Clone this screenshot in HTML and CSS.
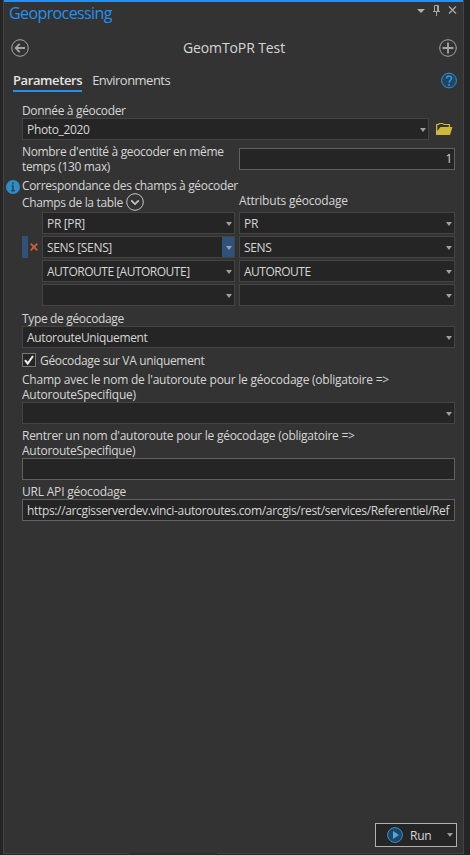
FILE: index.html
```html
<!DOCTYPE html>
<html lang="fr">
<head>
<meta charset="utf-8">
<title>Geoprocessing</title>
<link rel="stylesheet" href="styles.css">
</head>
<body>
<main class="panel">
  <header class="titlebar">
    <h1>Geoprocessing</h1>
    <svg class="window-icons" width="42" height="14" viewBox="0 0 42 14">
      <path class="fill" d="M1 5h8L5 9z"/>
      <path d="M18.5 1.5h4v6h-4zM17 7.5h7M20.5 8v4M21.5 2v5"/>
      <path class="cross" d="M33 2.5l7 7M40 2.5l-7 7"/>
    </svg>
  </header>
  <div class="toolbar">
    <svg width="18" height="18" viewBox="0 0 18 18"><circle cx="9" cy="9" r="8.3"/><path class="thick" d="M4.8 9H14M8.7 4.8L4.6 9l4.1 4.2"/></svg>
    <h2>GeomToPR Test</h2>
    <svg width="18" height="18" viewBox="0 0 18 18"><circle cx="9" cy="9" r="8.3"/><path class="thick" d="M3.5 9h11M9 3.5v11"/></svg>
  </div>
  <nav class="tabs">
    <span class="tab active">Parameters</span>
    <span class="tab">Environments</span>
    <svg class="help" width="16" height="17" viewBox="0 0 16 17"><circle cx="8" cy="8.5" r="7.4"/><path d="M5.5 6.5c0-3.3 5-3.1 5-.2 0 2-2.5 2-2.5 4.2M8 12v1.7"/></svg>
  </nav>
  <section class="form">
    <label>Donnée à géocoder</label>
    <div class="source">
      <div class="field combo">Photo_2020</div>
      <svg width="17" height="14" viewBox="0 0 17 14"><path fill="#cfb73a" d="M0 2h2l1-1h4l1 1h6v3h2.5L14 13H0z"/><path fill="#333" d="M1.3 3h1.5l1-1h3l1 1h5v2H4.5L1.3 9z"/></svg>
    </div>
    <div class="count">
      <label>Nombre d'entité à geocoder en même<br>temps (130 max)</label>
      <div class="field text number">1</div>
    </div>
    <div class="mapping-title">
      <svg class="info" width="14" height="14" viewBox="0 0 14 14"><circle cx="7" cy="7" r="7"/><path d="M7 2.5v2M5.5 6H7v4.5M5 10.8h4"/></svg>
      <label>Correspondance des champs à géocoder</label>
    </div>
    <div class="mapping-head">
      <label>Champs de la table</label>
      <svg class="expand" width="18" height="18" viewBox="0 0 18 18"><circle cx="9" cy="9" r="8.3"/><path d="M5.2 7.3L9 11l3.8-3.7"/></svg>
      <label class="attr">Attributs géocodage</label>
    </div>
    <div class="mapping">
      <i></i><div class="field combo">PR [PR]</div><div class="field combo">PR</div>
      <i class="selected"><svg width="8" height="8" viewBox="0 0 8 8"><path d="M.7.7l6.6 6.6M7.3.7L.7 7.3"/></svg></i><div class="field combo hot">SENS [SENS]</div><div class="field combo">SENS</div>
      <i></i><div class="field combo caps">AUTOROUTE [AUTOROUTE]</div><div class="field combo caps">AUTOROUTE</div>
      <i></i><div class="field combo"></div><div class="field combo"></div>
    </div>
    <label class="type-label">Type de géocodage</label>
    <div class="field combo">AutorouteUniquement</div>
    <div class="check">
      <span class="box"><svg width="12" height="12" viewBox="0 0 12 12"><path d="M2 6.2l2.7 3.3L10 2"/></svg></span>
      <label>Géocodage sur VA uniquement</label>
    </div>
    <label class="long1">Champ avec le nom de l'autoroute pour le géocodage (obligatoire =&gt;<br>AutorouteSpecifique)</label>
    <div class="field combo"></div>
    <label class="long2">Rentrer un nom d'autoroute pour le géocodage (obligatoire =&gt;<br>AutorouteSpecifique)</label>
    <div class="field text"></div>
    <label class="url-label">URL API géocodage</label>
    <div class="field text url">https://arcgisserverdev.vinci-autoroutes.com/arcgis/rest/services/Referentiel/Ref</div>
  </section>
  <footer>
    <div class="run">
      <svg width="16" height="16" viewBox="0 0 16 16"><circle cx="8" cy="8" r="7.4"/><path d="M6 4l6 4-6 4z"/></svg>
      <span>Run</span>
    </div>
  </footer>
</main>
<div class="dock"><span></span><span></span><span></span></div>
</body>
</html>
```

FILE: styles.css
```css
* { box-sizing: border-box; }
body {
  margin: 0;
  height: 855px;
  padding: 0 6px 0 3px;
  overflow: hidden;
  background: #252525;
  color: #d6d6d6;
  font: 12px/15px "Open Sans", "Noto Sans", sans-serif;
  letter-spacing: -0.34px;
  white-space: nowrap;
}
h1, h2 { margin: 0; font-weight: 400; }
svg { display: block; fill: none; stroke: #a5a5a5; flex: none; }
.fill { fill: #b0b0b0; stroke: none; }
.cross { stroke-width: 1.4; }
.thick { stroke-width: 1.8; }
.panel {
  display: flex;
  flex-direction: column;
  height: 853px;
  border: solid #444447;
  border-width: 0 1px;
  background: #333;
}
.titlebar {
  display: flex;
  justify-content: space-between;
  height: 34px;
  padding: 1px 5px 0 5px;
  border-top: 2px solid #2590ee;
}
h1 { color: #2590ee; font-size: 16px; line-height: 20px; letter-spacing: -0.6px; }
.window-icons { margin-top: 1px; }
.toolbar {
  display: flex;
  justify-content: space-between;
  align-items: center;
  height: 27px;
  padding: 0 6px 0 7px;
}
h2 { font-size: 14px; line-height: 20px; letter-spacing: -0.1px; }
.tabs {
  display: flex;
  gap: 10px;
  height: 42px;
  padding: 11px 6px 0 9px;
  font-size: 13px;
  line-height: 17px;
}
.tab { height: 20px; letter-spacing: -0.52px; }
.active { border-bottom: 2px solid #2590ee; color: #e4e4e4; font-weight: 600; letter-spacing: -0.4px; }
.help { margin-left: auto; fill: #1d4667; stroke: #3a91c9; }
.help path { stroke-width: 1.7; }
.form { padding: 0 8px 0 18px; }
label { display: block; }
.field {
  position: relative;
  height: 22px;
  padding: 1px 4px 0;
  border: 1px solid #444;
  background: #252525;
  line-height: 20px;
}
.text { border-color: #606060; }
.combo::after {
  content: "";
  position: absolute;
  right: 2px;
  top: 9px;
  border: solid transparent;
  border-width: 4px 3px 0;
  border-top-color: #a0a0a0;
}
.hot::before {
  content: "";
  position: absolute;
  right: 0;
  top: 0;
  width: 12px;
  height: 20px;
  background: #30527a;
}
.caps { letter-spacing: -0.5px; }
.source { display: flex; gap: 7px; align-items: center; }
.source .combo { width: 407px; }
.source svg { stroke: none; }
.count { display: flex; justify-content: space-between; height: 38px; padding-top: 8px; }
.count label { margin-top: -4px; }
.number { width: 216px; padding-top: 0; padding-right: 2px; text-align: right; }
.mapping-title { display: flex; gap: 2px; height: 15px; margin-left: -16px; }
.info { margin-top: 2px; fill: #318bc5; stroke: none; }
.info path { stroke: #27475f; stroke-width: 1.5; }
.mapping-head { display: grid; grid-template-columns: 104px 113px 1fr; height: 19px; }
.mapping-head label { margin-top: 2px; }
.mapping-head .attr { margin-top: 0; letter-spacing: -0.2px; }
.expand { stroke: #c5c5c5; }
.expand path { stroke-width: 1.7; }
.mapping { display: grid; grid-template-columns: 16px 193px 216px; gap: 2px 4px; }
.selected { padding: 7px 0 0 2px; border-left: 6px solid #30527a; }
.selected svg { stroke: #c7603f; stroke-width: 1.9; }
.type-label { margin-top: 5px; }
.check { display: flex; gap: 4px; margin-top: 5px; height: 18px; }
.box { width: 14px; height: 14px; border: 1px solid #777; background: #252525; }
.box svg { stroke: #eee; stroke-width: 2; }
.long1 { margin-top: 1px; letter-spacing: -0.23px; }
.long2 { margin-top: 4px; letter-spacing: -0.26px; }
.url-label { margin-top: 4px; letter-spacing: -0.2px; }
.url { overflow: hidden; padding-right: 0; }
footer { display: flex; justify-content: flex-end; margin-top: auto; padding: 0 6px 6px; }
.run {
  position: relative;
  display: flex;
  gap: 7px;
  align-items: center;
  width: 82px;
  height: 24px;
  padding-left: 11px;
  border: 1px solid #b0b0b0;
  background: #252525;
  letter-spacing: -0.2px;
}
.run svg { fill: #1d4667; stroke: #3a91c9; }
.run path { fill: #4ea6dd; stroke: none; }
.run::after {
  content: "";
  position: absolute;
  right: 3px;
  top: 9px;
  border: solid transparent;
  border-width: 4px 3px 0;
  border-top-color: #999;
}
.dock { display: grid; grid-template-columns: 126px 88px 1fr; height: 2px; }
.dock span { border-top: 1px solid #444447; }
.dock span:nth-child(2) { border: 0; background: #2c2c2c; }
```
